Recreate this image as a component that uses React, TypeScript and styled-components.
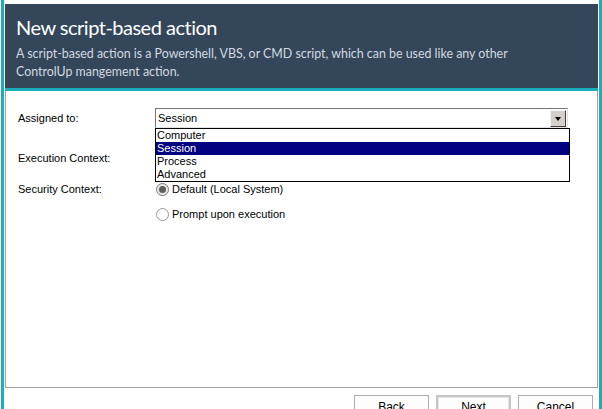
import React from "react";
import styled, { createGlobalStyle } from "styled-components";

const Global = createGlobalStyle`
  html, body { margin: 0; padding: 0; background: #ffffff; }
  body { width: 602px; height: 409px; overflow: hidden; }
  * { box-sizing: border-box; }
`;

const TEAL = "#19adbd";

const Frame = styled.div`
  display: flex;
  width: 602px;
  height: 409px;
  background: #ffffff;
`;

const Accent = styled.div`
  width: 3px;
  flex: none;
  background: ${TEAL};
  margin-left: 1px;
`;

const Main = styled.div`
  flex: none;
  width: 593px;
  margin-left: 1px;
  display: flex;
  flex-direction: column;
  padding-top: 4px;
`;

const Header = styled.div`
  height: 84px;
  background: #34475a;
  padding: 9px 0 0 11px;
  font-family: Lato, "Open Sans", sans-serif;
`;

const Title = styled.div`
  color: #ffffff;
  font-size: 20px;
  letter-spacing: -0.5px;
  line-height: 28px;
`;

const Subtitle = styled.div`
  color: #d2d9e0;
  font-size: 12.4px;
  line-height: 18px;
  margin-top: 4px;
`;

const HeaderRule = styled.div`
  height: 3px;
  background: ${TEAL};
`;

const Body = styled.div`
  height: 297px;
  border: 1px solid #a0a0a0;
  border-top: none;
  padding: 17px 0 0 12px;
  font-family: "Liberation Sans", Arial, sans-serif;
  font-size: 11px;
  color: #000000;
`;

const Row = styled.div<{ $top?: number; $align?: string }>`
  display: grid;
  grid-template-columns: 137px 415px;
  align-items: ${(p) => p.$align || "center"};
  margin-top: ${(p) => p.$top || 0}px;
`;

const Label = styled.div<{ $offset?: number }>`
  line-height: 13px;
  padding-top: ${(p) => p.$offset || 0}px;
`;

const ComboWrap = styled.div`
  position: relative;
  width: 413px;
`;

const Combo = styled.div`
  height: 20px;
  display: flex;
  align-items: center;
  border: 1px solid;
  border-color: #767676 #e3e3e3 #e3e3e3 #767676;
  background: #ffffff;
  padding: 0 1px 0 2px;
`;

const ComboText = styled.span`
  flex: 1;
  line-height: 13px;
`;

const DropButton = styled.div`
  width: 16px;
  height: 17px;
  background: #d4d0c8;
  border: 1px solid;
  border-color: #f4f4f4 #404040 #404040 #f4f4f4;
  display: flex;
  align-items: center;
  justify-content: center;
`;

const Arrow = styled.span`
  width: 0;
  height: 0;
  border-left: 3.5px solid transparent;
  border-right: 3.5px solid transparent;
  border-top: 4px solid #000000;
  margin-top: 1px;
`;

const List = styled.div`
  position: absolute;
  left: 0;
  top: 20px;
  width: 415px;
  border: 1px solid #000000;
  background: #ffffff;
  z-index: 2;
`;

const Item = styled.div<{ $selected?: boolean }>`
  height: 13px;
  line-height: 13px;
  padding-left: 1px;
  background: ${(p) => (p.$selected ? "#000080" : "#ffffff")};
  color: ${(p) => (p.$selected ? "#ffffff" : "#000000")};
`;

const RadioGroup = styled.div`
  display: flex;
  flex-direction: column;
  gap: 9px;
`;

const RadioRow = styled.div`
  display: flex;
  align-items: center;
  height: 16px;
  gap: 3px;
  font-size: 11px;
  margin-left: 1px;
`;

const RadioCircle = styled.span<{ $checked?: boolean }>`
  width: 13px;
  height: 13px;
  border-radius: 50%;
  border: 1px solid ${(p) => (p.$checked ? "#7a7a7a" : "#9a9a9a")};
  background: ${(p) => (p.$checked ? "#e8e8e8" : "#ffffff")};
  display: flex;
  align-items: center;
  justify-content: center;
  &::after {
    content: "";
    display: ${(p) => (p.$checked ? "block" : "none")};
    width: 7px;
    height: 7px;
    border-radius: 50%;
    background: #5e5e5e;
  }
`;

const Footer = styled.div`
  height: 21px;
  display: flex;
  justify-content: flex-end;
  align-items: flex-start;
  gap: 7px;
  padding: 7px 5px 0 0;
`;

const Button = styled.div<{ $default?: boolean }>`
  flex: none;
  width: 75px;
  height: 23px;
  border: ${(p) => (p.$default ? "2px solid #c4c4c4" : "1px solid #adadad")};
  box-shadow: ${(p) => (p.$default ? "inset 0 0 0 1px #e6e6e6" : "none")};
  background: #fdfdfd;
  font-family: "Liberation Sans", Arial, sans-serif;
  font-size: 12px;
  color: #000000;
  display: flex;
  justify-content: center;
  padding-top: ${(p) => (p.$default ? 3 : 4)}px;
`;

export default function App() {
  return (
    <>
      <Global />
      <Frame>
        <Accent />
        <Main>
          <Header>
            <Title>New script-based action</Title>
            <Subtitle>
              A script-based action is a Powershell, VBS, or CMD script, which can be used like any other
              <br />
              ControlUp mangement action.
            </Subtitle>
          </Header>
          <HeaderRule />
          <Body>
            <Row>
              <Label>Assigned to:</Label>
              <ComboWrap>
                <Combo>
                  <ComboText>Session</ComboText>
                  <DropButton>
                    <Arrow />
                  </DropButton>
                </Combo>
                <List>
                  <Item>Computer</Item>
                  <Item $selected>Session</Item>
                  <Item>Process</Item>
                  <Item>Advanced</Item>
                </List>
              </ComboWrap>
            </Row>
            <Row $top={20}>
              <Label>Execution Context:</Label>
              <ComboWrap>
                <Combo>
                  <ComboText />
                  <DropButton>
                    <Arrow />
                  </DropButton>
                </Combo>
              </ComboWrap>
            </Row>
            <Row $top={13} $align="start">
              <Label $offset={2}>Security Context:</Label>
              <RadioGroup>
                <RadioRow>
                  <RadioCircle $checked />
                  Default (Local System)
                </RadioRow>
                <RadioRow>
                  <RadioCircle />
                  Prompt upon execution
                </RadioRow>
              </RadioGroup>
            </Row>
          </Body>
          <Footer>
            <Button>Back</Button>
            <Button $default>Next</Button>
            <Button>Cancel</Button>
          </Footer>
        </Main>
        <Accent />
      </Frame>
    </>
  );
}
